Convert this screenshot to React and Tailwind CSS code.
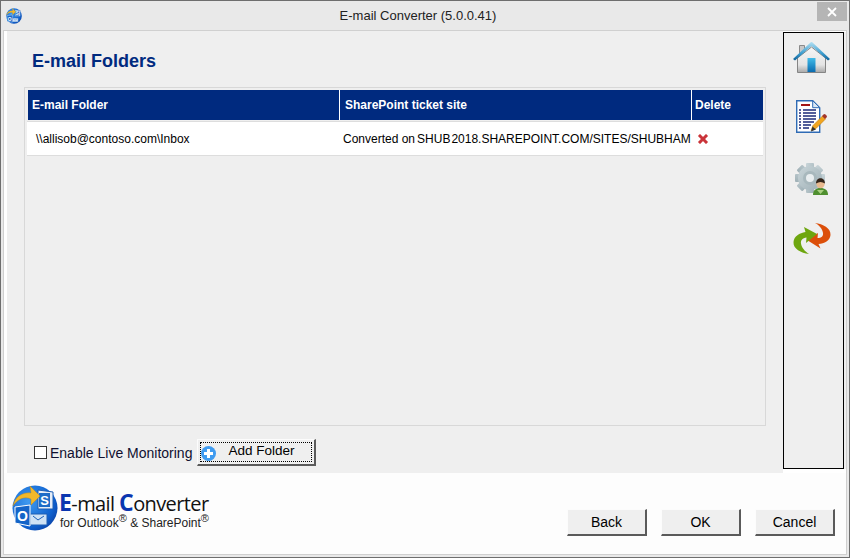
const sans = "font-['Liberation_Sans',Arial,sans-serif]";

function HomeIcon() {
  return (
    <svg width="37" height="31" viewBox="0 0 37 31">
      <defs>
        <linearGradient id="roof" x1="0" y1="0" x2="0" y2="1">
          <stop offset="0" stopColor="#b4e0f2" />
          <stop offset=".6" stopColor="#3f9fd0" />
          <stop offset="1" stopColor="#0a5f98" />
        </linearGradient>
        <linearGradient id="wall" x1="0" y1="0" x2="0" y2="1">
          <stop offset="0" stopColor="#f6f6f6" />
          <stop offset=".7" stopColor="#e4e4e4" />
          <stop offset="1" stopColor="#a8a8a8" />
        </linearGradient>
        <linearGradient id="door" x1="0" y1="0" x2="0" y2="1">
          <stop offset="0" stopColor="#42bce8" />
          <stop offset="1" stopColor="#0a6bb0" />
        </linearGradient>
      </defs>
      <path d="M6.500 3.500h5v8h-5z" fill="#c8c8c8" stroke="#8a8a8a" />
      <path d="M4.500 16 18.500 5l14 11v14.500h-28z" fill="url(#wall)" stroke="#858585" />
      <path d="M0 17 18 0h1l18 17-2 1.500L18.500 4 2 18.500z" fill="url(#roof)" />
      <path d="M14.500 16h8v14h-8z" fill="url(#door)" />
    </svg>
  );
}

function DocIcon() {
  return (
    <svg width="31" height="33" viewBox="0 0 31 33">
      <path d="M.7.7h16l7 7v24.600H.7z" fill="#fff" stroke="#2f6bb5" strokeWidth="1.400" />
      <path d="M16.700.7v7h7z" fill="#dbe8f5" stroke="#2f6bb5" />
      <path d="M5 4h9v2H5z" fill="#a31515" />
      <path d="M3 10h2M7 10h13M3 13h2M7 13h13M3 16h2M7 16h13M3 19h2M7 19h13M3 22h2M7 22h11M3 25h2M7 25h8M3 28h2M7 28h6" stroke="#1b2a78" strokeWidth="1.300" />
      <path d="M15 30.500l2-5 9.500-9.500 3 3-9.500 9.500z" fill="#f2a51f" stroke="#b87a12" strokeWidth=".6" />
      <path d="M26 16l1.500-1.500a1.500 1.500 0 0 1 2 0l1 1a1.500 1.500 0 0 1 0 2L29 19z" fill="#a3352a" />
      <path d="M15 31.500l1.500-5 3.500 3z" fill="#333" />
    </svg>
  );
}

const gearTeeth = [0, 45, 90, 135];

function GearIcon() {
  return (
    <svg width="33" height="32" viewBox="0 0 33 32">
      <defs>
        <linearGradient id="gear" x1="0" y1="0" x2="1" y2="1">
          <stop offset="0" stopColor="#c9d5d9" />
          <stop offset="1" stopColor="#9fb0b6" />
        </linearGradient>
      </defs>
      <g fill="url(#gear)">
        {gearTeeth.map((deg) => (
          <rect key={deg} x="11" y="0" width="8" height="30" rx="1" transform={`rotate(${deg} 15 15)`} />
        ))}
        <circle cx="15" cy="15" r="12" />
      </g>
      <circle cx="15" cy="15" r="7" fill="#a8b8bd" />
      <circle cx="15" cy="15" r="4" fill="#e9eef0" />
      <path d="M18 32c0-5 3-7 7.500-7s7.500 2 7.500 7z" fill="#4f8f2f" />
      <path d="M22 27h7l-3.500 4z" fill="#a8d080" />
      <circle cx="25.500" cy="21" r="4.200" fill="#e8b98f" />
      <path d="M21 20.500c0-7 9-7 9 0-3-2-6-2-9 0z" fill="#33241a" />
    </svg>
  );
}

function SyncIcon() {
  return (
    <svg width="38" height="31" viewBox="0 0 38 31">
      <path d="M22 0c8 1 16 5 15.500 12-.5 6-6 8.500-12 9l2 4.500L14 17l11-7-.5 5c4 0 6-2 5.500-5-.5-4-4-8-8-10z" fill="#dc4f0a" />
      <path d="M16 31C8 30 0 26 .5 19c.5-6 6-9 12-10L11 4l13 7-11 9 .5-5.500c-4 .5-6 2.500-5.500 6 .5 4 4 8 8 10.500z" fill="#6ea60f" />
    </svg>
  );
}

function AppLogo({ size }) {
  return (
    <svg width={size} height={size} viewBox="0 0 46 46">
      <defs>
        <radialGradient id={`globe${size}`} cx=".35" cy=".35" r=".8">
          <stop offset="0" stopColor="#3f9af0" />
          <stop offset=".7" stopColor="#0f62d0" />
          <stop offset="1" stopColor="#0a3a9a" />
        </radialGradient>
      </defs>
      <circle cx="23" cy="23" r="22.500" fill={`url(#globe${size})`} />
      <path d="M26 5 41 7v17H26z" fill="#e6eef8" stroke="#1c5fb5" />
      <path d="M27 8h11v14H27z" fill="#1c6cc8" />
      <text x="32.500" y="20" textAnchor="middle" fontSize="13" fontWeight="700" fill="#fff" fontFamily="Liberation Sans">S</text>
      <path d="M18 29h17v11H18z" fill="#cfe2f5" stroke="#1c5fb5" />
      <path d="M21 31l5 4 6-4" fill="none" stroke="#1c5fb5" />
      <path d="M3 22l15-2v21l-15-3z" fill="#1464c8" stroke="#fff" />
      <text x="10.500" y="36" textAnchor="middle" fontSize="14" fontWeight="700" fill="#fff" fontFamily="Liberation Sans">O</text>
      <path d="M1 21C3 12 10 7 19 8l-1-7 10 10-9 9 0-6C12 11 6 14 1 21z" fill="#f2b82a" stroke="#b8801a" strokeWidth=".4" />
    </svg>
  );
}

function WinButton({ children, className = "" }) {
  return (
    <button className={`h-[27px] bg-[#efefef] border-t border-l border-[#fcfcfc] border-r-2 border-b-2 border-r-[#5a5a5a] border-b-[#5a5a5a] text-[14px] text-black ${className}`}>
      {children}
    </button>
  );
}

export default function App() {
  return (
    <div className={`w-[850px] h-[558px] flex flex-col overflow-hidden bg-[#e9e9e9] border border-[#6e6e6e] ${sans}`}>
      <header className="h-[29px] flex items-center shrink-0">
        <div className="ml-[5px]">
          <AppLogo size={16} />
        </div>
        <p className="flex-1 text-center text-[13px] text-[#222] pr-[3px]">E-mail Converter (5.0.0.41)</p>
        <div className="w-[30px] h-[19px] mr-[2px] self-start mt-[1px] bg-[#b5b5b5] flex items-center justify-center">
          <svg width="10" height="10" viewBox="0 0 10 10">
            <path d="M1 1l8 8M9 1l-8 8" stroke="#fff" strokeWidth="1.800" />
          </svg>
        </div>
      </header>

      <div className="flex-1 min-h-0 ml-[2px] mr-[2px] mb-[2px] flex flex-col border border-[#d0d0d0] bg-white">
        <div className="h-[442px] flex shrink-0">
          <main className="ml-[3px] w-[776px] bg-[#efefef] px-[17px] flex flex-col">
            <h1 className="text-[18px] leading-[20px] font-bold text-[#002a7f] mt-[20px] ml-[8px]">E-mail Folders</h1>
            <div className="mt-[16px] h-[339px] border border-[#d8d8d8] pl-[3px] pt-[2px]">
              <div className="flex h-[30px] w-[735px] text-white text-[12px] font-bold gap-[1px] bg-white">
                <div className="w-[311px] bg-[#002a7f] flex items-center pl-[4px]">E-mail Folder</div>
                <div className="w-[351px] bg-[#002a7f] flex items-center pl-[5px]">SharePoint ticket site</div>
                <div className="w-[71px] bg-[#002a7f] flex items-center pl-[3px]">Delete</div>
              </div>
              <div className="flex h-[35px] mt-[1px] -ml-[1px] w-[736px] items-center bg-white border-t border-b border-[#dddddd] text-[12px] text-black">
                <div className="w-[313px] pl-[9px]">\\allisob@contoso.com\Inbox</div>
                <div className="w-[351px] pl-[3px] flex items-center whitespace-nowrap overflow-hidden">
                  <span>Converted on</span>
                  <span className="ml-[2px] mt-[1px]">SHUB</span>
                  <span className="ml-[1px]">2018.SHAREPOINT.COM/SITES/SHUBHAM</span>
                </div>
                <div className="pl-[6px] flex items-center">
                  <svg width="12" height="12" viewBox="0 0 12 12">
                    <path d="M1 3l2-2 3 3 3-3 2 2-3 3 3 3-2 2-3-3-3 3-2-2 3-3z" fill="#c9343a" stroke="#e07a7a" strokeWidth=".5" />
                  </svg>
                </div>
              </div>
            </div>
            <div className="mt-[14px] flex items-center pl-[10px]">
              <span className="w-[13px] h-[13px] border border-[#333] bg-white mt-[-1px]" />
              <span className="ml-[3px] text-[14px] text-[#101030]">Enable Live Monitoring</span>
              <WinButton className="ml-[5px] w-[119px] flex items-center relative -mt-[1px]">
                <span className="absolute inset-[2px] border border-dotted border-black" />
                <span className="ml-[3px] w-[15px] h-[15px] mt-[3px] rounded-full bg-[#3f9bf0] flex items-center justify-center text-white">
                  <svg width="9" height="9" viewBox="0 0 9 9">
                    <path d="M3 0h3v3h3v3H6v3H3V6H0V3h3z" fill="#fff" />
                  </svg>
                </span>
                <span className="ml-[12px] -mt-[2px] text-[13.5px]">Add Folder</span>
              </WinButton>
            </div>
          </main>
          <aside className="w-[61px] h-[437px] mt-[1px] bg-[#efefef] border border-black shadow-[2px_0_0_#efefef] flex flex-col items-center pt-[9px] pr-[4px]">
            <HomeIcon />
            <div className="mt-[27px]"><DocIcon /></div>
            <div className="mt-[30px]"><GearIcon /></div>
            <div className="mt-[28px]"><SyncIcon /></div>
          </aside>
        </div>
        <footer className="flex-1 bg-[#fdfdfd] flex justify-between">
          <div className="ml-[8px] mt-[12px] flex items-start">
            <AppLogo size={46} />
            <div className="ml-[1px] mt-[7px]">
              <p className="text-[20px] leading-[20px] text-[#111] font-['Open_Sans',sans-serif] tracking-[-0.6px]">
                <b className="text-[#0a36b0] text-[23px]">E</b>-mail <b className="text-[#0a36b0] text-[23px]">C</b>onverter
              </p>
              <p className="text-[12px] leading-[14px] mt-[2px] ml-[1px] text-[#222]">
                for Outlook<sup className="text-[11px] leading-none">®</sup> &amp; SharePoint<sup className="text-[11px] leading-none">®</sup>
              </p>
            </div>
          </div>
          <div className="flex gap-[14px] mt-[36px] mr-[11px]">
            <WinButton className="w-[80px]">Back</WinButton>
            <WinButton className="w-[80px]">OK</WinButton>
            <WinButton className="w-[80px]">Cancel</WinButton>
          </div>
        </footer>
      </div>
    </div>
  );
}
